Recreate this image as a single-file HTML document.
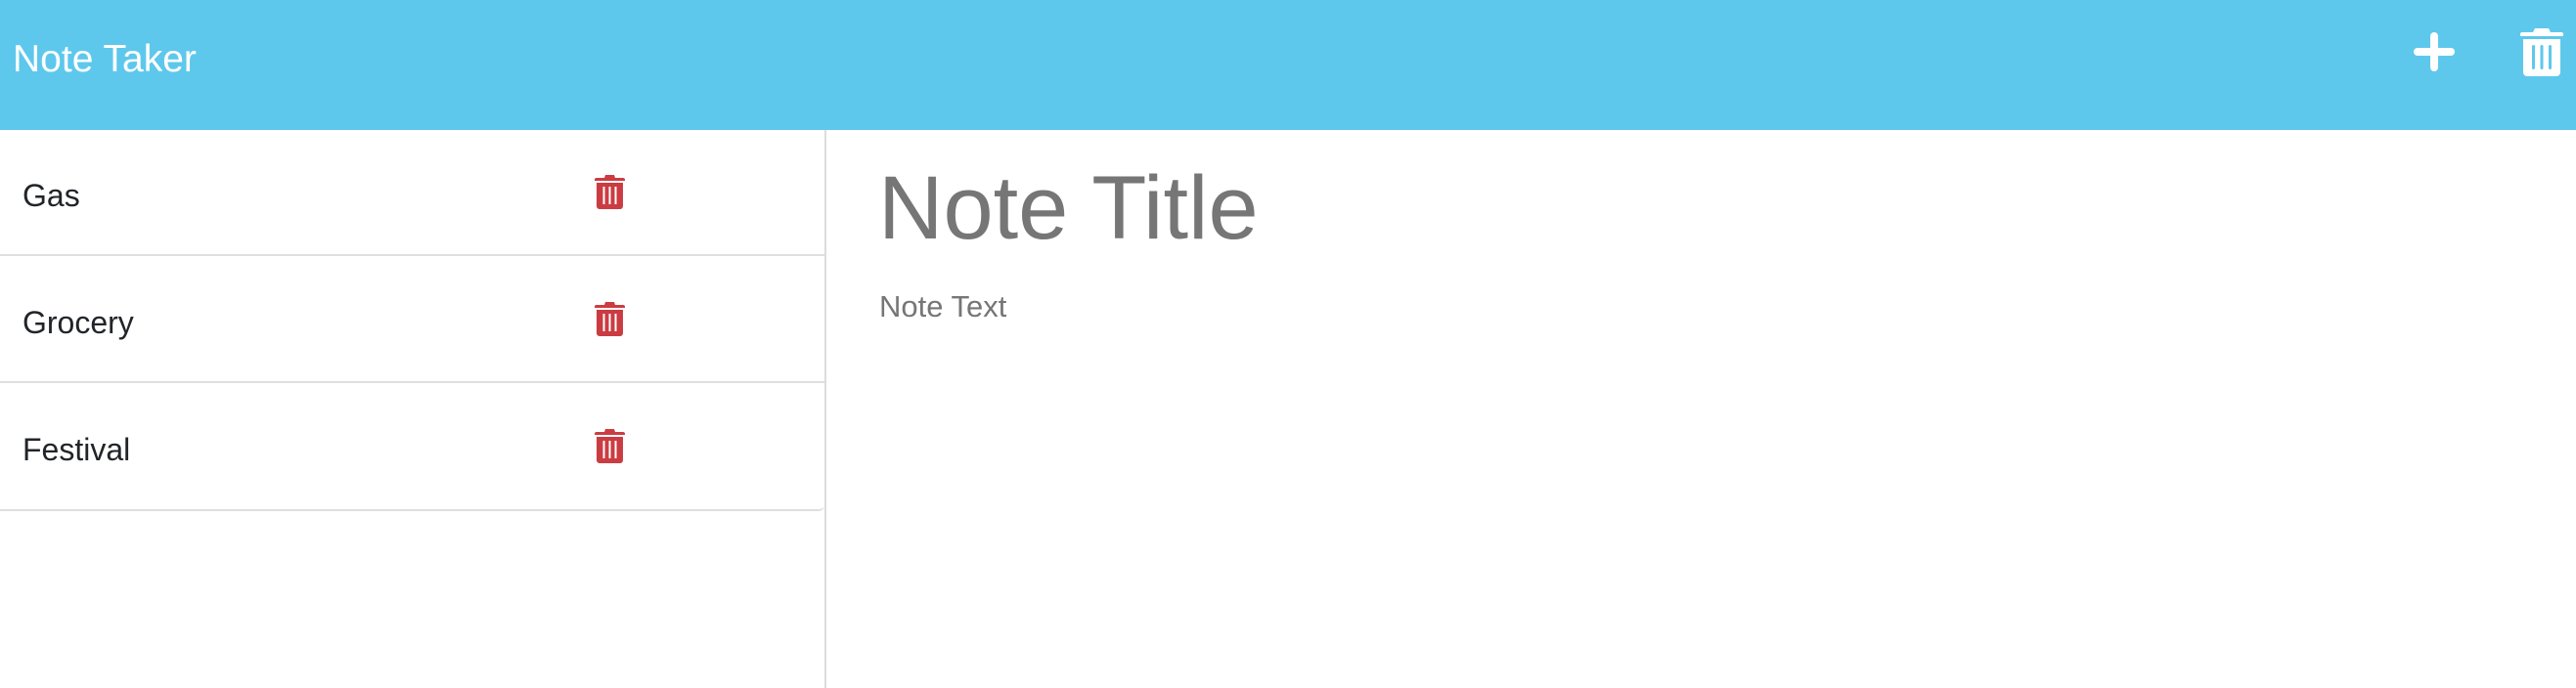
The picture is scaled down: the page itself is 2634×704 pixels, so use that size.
<!DOCTYPE html>
<html><head><meta charset="utf-8"><style>
html,body{margin:0;padding:0;width:2634px;height:704px;overflow:hidden;background:#fff;font-family:"Liberation Sans",Arial,sans-serif;}
.hdr{position:absolute;left:0;top:0;width:2634px;height:133px;background:#5ec8ec;}
.brand{position:absolute;left:13px;top:41px;font-size:39px;color:#fff;line-height:1;}
.left{position:absolute;left:0;top:133px;width:843px;height:571px;border-right:2px solid #dcdcdc;}
.row{position:absolute;left:0;width:843px;border-bottom:2px solid #dfdfdf;}
.row span{position:absolute;left:23px;font-size:32px;color:#212529;line-height:1;}
.row svg{position:absolute;left:608px;}
.title{position:absolute;left:898px;top:167px;font-size:92px;color:#767676;line-height:1;}
.text{position:absolute;left:899px;top:298px;font-size:31px;color:#767676;line-height:1;}
</style></head><body>
<div class="hdr">
<div class="brand">Note Taker</div>
<svg style="position:absolute;left:2466px;top:32px" width="46" height="42" viewBox="0 0 46 42"><rect x="19" y="1" width="8" height="40" rx="4" fill="#fff"/><rect x="2" y="17" width="42" height="8" rx="4" fill="#fff"/></svg>
<svg style="position:absolute;left:2577px;top:29px" width="44" height="49" viewBox="0 0 44 49"><path d="M15 0h14l2 4h11a2 2 0 0 1 2 2v2H0V6a2 2 0 0 1 2-2h11z" fill="#fff"/><path d="M3 11h38v34a4 4 0 0 1-4 4H7a4 4 0 0 1-4-4z" fill="#fff"/><rect x="12" y="17" width="3" height="25" rx="1.5" fill="#5ec8ec"/><rect x="20.5" y="17" width="3" height="25" rx="1.5" fill="#5ec8ec"/><rect x="29" y="17" width="3" height="25" rx="1.5" fill="#5ec8ec"/></svg>
</div>
<div class="left">
<div class="row" style="top:0;height:127px"><span style="top:51px">Gas</span>
<svg style="top:46px" width="31" height="35" viewBox="0 0 31 35"><path d="M11 0h9l1 3h8a2 2 0 0 1 2 2v1H0V5a2 2 0 0 1 2-2h8z" fill="#cb3c42"/><path d="M2 8h27v24a3 3 0 0 1-3 3H5a3 3 0 0 1-3-3z" fill="#cb3c42"/><rect x="8.5" y="12" width="2" height="18" fill="#fff"/><rect x="14.5" y="12" width="2" height="18" fill="#fff"/><rect x="20.5" y="12" width="2" height="18" fill="#fff"/></svg></div>
<div class="row" style="top:129px;height:128px"><span style="top:52px">Grocery</span>
<svg style="top:47px" width="31" height="35" viewBox="0 0 31 35"><path d="M11 0h9l1 3h8a2 2 0 0 1 2 2v1H0V5a2 2 0 0 1 2-2h8z" fill="#cb3c42"/><path d="M2 8h27v24a3 3 0 0 1-3 3H5a3 3 0 0 1-3-3z" fill="#cb3c42"/><rect x="8.5" y="12" width="2" height="18" fill="#fff"/><rect x="14.5" y="12" width="2" height="18" fill="#fff"/><rect x="20.5" y="12" width="2" height="18" fill="#fff"/></svg></div>
<div class="row" style="top:259px;height:129px;border-bottom-right-radius:6px"><span style="top:52px">Festival</span>
<svg style="top:47px" width="31" height="35" viewBox="0 0 31 35"><path d="M11 0h9l1 3h8a2 2 0 0 1 2 2v1H0V5a2 2 0 0 1 2-2h8z" fill="#cb3c42"/><path d="M2 8h27v24a3 3 0 0 1-3 3H5a3 3 0 0 1-3-3z" fill="#cb3c42"/><rect x="8.5" y="12" width="2" height="18" fill="#fff"/><rect x="14.5" y="12" width="2" height="18" fill="#fff"/><rect x="20.5" y="12" width="2" height="18" fill="#fff"/></svg></div>
</div>
<div class="title">Note Title</div>
<div class="text">Note Text</div>
</body></html>
